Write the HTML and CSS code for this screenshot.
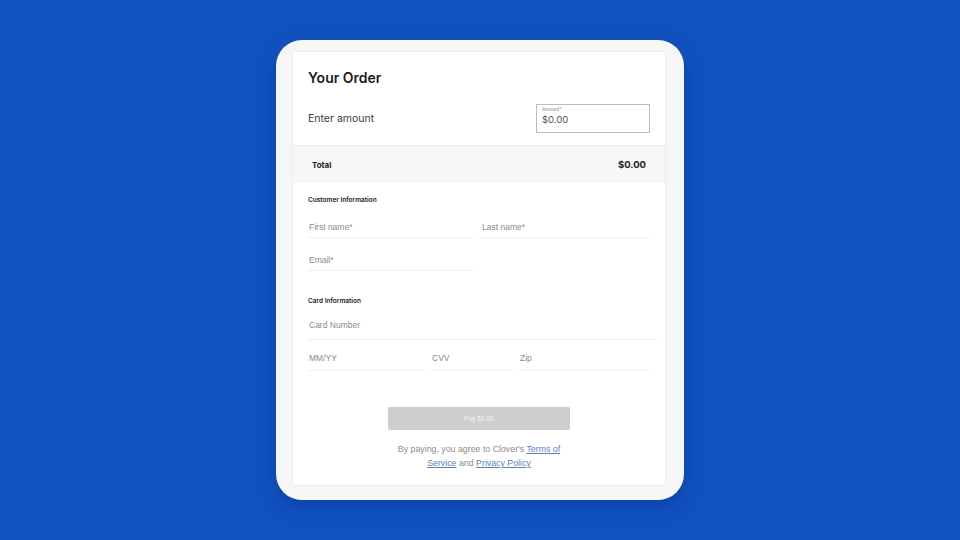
FILE: index.html
```html
<!DOCTYPE html>
<html>
<head>
<meta charset="utf-8">
<link rel="stylesheet" href="styles.css">
</head>
<body>
<div class="stage">
  <div class="frame">
    <div class="card">
      <h1 class="title">Your Order</h1>
      <div class="amount-row">
        <span class="amount-label">Enter amount</span>
        <div class="amount-box">
          <span class="amount-tag">Amount*</span>
          <span class="amount-val">$0.00</span>
        </div>
      </div>
      <div class="total-row">
        <span class="total-label">Total</span>
        <span class="total-val">$0.00</span>
      </div>
      <div class="section">
        <div class="section-title">Customer Information</div>
        <div class="grid two">
          <div class="field">First name*</div>
          <div class="field">Last name*</div>
          <div class="field">Email*</div>
        </div>
      </div>
      <div class="section card-sec">
        <div class="section-title">Card Information</div>
        <div class="field full">Card Number</div>
        <div class="grid three">
          <div class="field">MM/YY</div>
          <div class="field">CVV</div>
          <div class="field">Zip</div>
        </div>
      </div>
      <div class="pay-wrap">
        <div class="pay">Pay $0.00</div>
        <p class="terms">By paying, you agree to Clover's <a>Terms of</a><br><a>Service</a> and <a>Privacy Policy</a></p>
      </div>
    </div>
  </div>
</div>
</body>
</html>
```

FILE: styles.css
```css
html, body {
  margin: 0;
  padding: 0;
}
body {
  background: #1152c1;
  font-family: "Liberation Sans", Arial, sans-serif;
}
.stage {
  width: 960px;
  height: 540px;
  display: flex;
  align-items: center;
  justify-content: center;
}
.frame {
  width: 408px;
  height: 460px;
  box-sizing: border-box;
  background: #f6f6f6;
  border-radius: 26px;
  padding: 12px 19px 15px 17px;
  box-shadow: 0 6px 18px rgba(0, 20, 70, 0.25);
}
.card {
  height: 100%;
  box-sizing: border-box;
  background: #fff;
  border-radius: 2px;
  box-shadow: 0 0 2px rgba(0, 0, 0, 0.12);
  display: flex;
  flex-direction: column;
}
.title {
  margin: 0;
  padding: 17px 15px 0;
  font-family: Inter, "Open Sans", sans-serif;
  font-weight: 600;
  font-size: 14px;
  line-height: 18px;
  color: #1a1a1a;
}
.amount-row {
  display: flex;
  align-items: center;
  justify-content: space-between;
  padding: 17px 15px 12px 15px;
}
.amount-label {
  font-family: Inter, "Open Sans", sans-serif;
  font-size: 10.5px;
  color: #3a3a3a;
}
.amount-box {
  width: 114px;
  height: 29px;
  box-sizing: border-box;
  border: 1px solid #bcbcbc;
  display: flex;
  flex-direction: column;
  padding: 1px 5px 0;
}
.amount-tag {
  font-size: 5px;
  line-height: 7px;
  color: #888;
}
.amount-val {
  font-family: Inter, "Open Sans", sans-serif;
  font-size: 9.5px;
  line-height: 14px;
  color: #555;
}
.total-row {
  background: #f7f7f7;
  border-top: 1px solid #eeeeee;
  height: 37px;
  display: flex;
  align-items: center;
  justify-content: space-between;
  padding: 0 19px 0 19px;
}
.total-label {
  font-family: Inter, "Open Sans", sans-serif;
  font-weight: 700;
  font-size: 8px;
  color: #222;
}
.total-val {
  font-family: Inter, "Open Sans", sans-serif;
  font-weight: 700;
  font-size: 9.5px;
  color: #222;
}
.section {
  padding: 13px 15px 0;
}
.section-title {
  font-family: Inter, "Open Sans", sans-serif;
  font-weight: 600;
  font-size: 6.5px;
  line-height: 8px;
  color: #222;
}
.grid {
  display: grid;
  column-gap: 8px;
}
.grid.two {
  grid-template-columns: 165px 168px;
  margin-top: 18px;
  row-gap: 17px;
}
.grid.three {
  grid-template-columns: 117px 82px 130px;
  column-gap: 6px;
  margin-top: 13px;
}
.field {
  font-size: 8.5px;
  line-height: 10px;
  color: #8a8a8a;
  padding: 0 0 5px 1px;
  border-bottom: 1px solid #f0f0f0;
}
.grid.three .field {
  padding-bottom: 7px;
}
.card-sec {
  padding-top: 26px;
}
.field.full {
  margin-top: 15px;
  padding-bottom: 9px;
  margin-right: -8px;
}
.pay-wrap {
  display: flex;
  flex-direction: column;
  align-items: center;
  padding-top: 36px;
}
.pay {
  width: 182px;
  height: 23px;
  background: #cecece;
  border-radius: 2px;
  color: #f4f4f4;
  font-size: 6.5px;
  display: flex;
  align-items: center;
  justify-content: center;
}
.terms {
  margin: 12px 0 0;
  text-align: center;
  font-size: 8.8px;
  line-height: 14px;
  color: #8c8c8c;
}
.terms a {
  color: #5b82b8;
  text-decoration: underline;
}
```
